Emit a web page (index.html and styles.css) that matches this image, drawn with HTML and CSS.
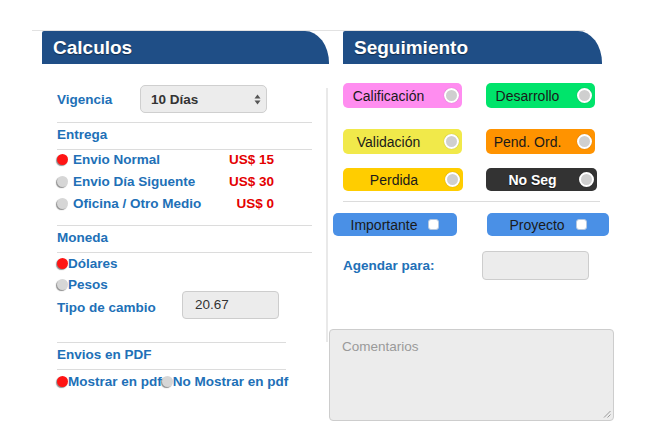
FILE: index.html
```html
<!DOCTYPE html>
<html lang="es">
<head>
<meta charset="utf-8">
<title>Calculos y Seguimiento</title>
<link rel="stylesheet" href="styles.css">
</head>
<body>
<div class="page">
  <div class="top-line"></div>
  <div class="cols">
    <section class="col-left">
      <h2 class="head">Calculos</h2>
      <div class="left-body">
        <div class="left-content">
          <div class="vig-row">
            <span class="lbl vig-lbl">Vigencia</span>
            <div class="select">
              <span>10 Días</span>
              <svg class="arrows" width="7" height="11" viewBox="0 0 7 11"><path d="M3.5 0.5 L6.5 4.5 L0.5 4.5 Z M3.5 10.5 L6.5 6.5 L0.5 6.5 Z" fill="#555"/></svg>
            </div>
          </div>
          <div class="rule rule-vig"></div>
          <div class="lbl sec-title">Entrega</div>
          <div class="rule rule-sec"></div>
          <div class="opts">
            <div class="opt"><span class="radio on"></span><span class="lbl opt-name">Envio Normal</span><span class="price">US$ 15</span></div>
            <div class="opt"><span class="radio"></span><span class="lbl opt-name">Envio Día Siguente</span><span class="price">US$ 30</span></div>
            <div class="opt"><span class="radio"></span><span class="lbl opt-name">Oficina / Otro Medio</span><span class="price">US$ 0</span></div>
          </div>
          <div class="rule rule-opts"></div>
          <div class="lbl sec-title">Moneda</div>
          <div class="rule rule-sec"></div>
          <div class="cur"><span class="radio on"></span><span class="lbl">Dólares</span></div>
          <div class="cur"><span class="radio"></span><span class="lbl">Pesos</span></div>
          <div class="tc-row">
            <span class="lbl tc-lbl">Tipo de cambio</span>
            <div class="input tc-input">20.67</div>
          </div>
          <div class="rule rule-short rule-pdf"></div>
          <div class="lbl sec-title">Envios en PDF</div>
          <div class="rule rule-short rule-sec"></div>
          <div class="pdf-row">
            <span class="radio on"></span><span class="lbl">Mostrar en pdf</span>
            <span class="radio"></span><span class="lbl">No Mostrar en pdf</span>
          </div>
        </div>
        <div class="vsep"></div>
      </div>
    </section>
    <section class="col-right">
      <h2 class="head">Seguimiento</h2>
      <div class="pill-row row1">
        <div class="pill pink w119"><span class="pill-txt pl-cal">Calificación</span><span class="knob"></span></div>
        <div class="pill green w109"><span class="pill-txt pl-des">Desarrollo</span><span class="knob"></span></div>
      </div>
      <div class="pill-row row2">
        <div class="pill yellow w119"><span class="pill-txt pl-cal">Validación</span><span class="knob"></span></div>
        <div class="pill orange w109"><span class="pill-txt pl-des">Pend. Ord.</span><span class="knob"></span></div>
      </div>
      <div class="pill-row row3">
        <div class="pill gold w120"><span class="pill-txt">Perdida</span><span class="knob"></span></div>
        <div class="pill dark w111"><span class="pill-txt">No Seg</span><span class="knob"></span></div>
      </div>
      <div class="rule rule-right"></div>
      <div class="btn-row">
        <div class="btn w124"><span>Importante</span><span class="chk"></span></div>
        <div class="btn w122"><span>Proyecto</span><span class="chk"></span></div>
      </div>
      <div class="ag-row">
        <span class="lbl ag-lbl">Agendar para:</span>
        <div class="input ag-input"></div>
      </div>
      <div class="textarea">
        <span class="ph">Comentarios</span>
        <svg class="grip" width="8" height="8" viewBox="0 0 8 8"><path d="M7.5 1 L1 7.5 M7.5 4.5 L4.5 7.5" stroke="#999" stroke-width="1"/></svg>
      </div>
    </section>
  </div>
</div>
</body>
</html>
```

FILE: styles.css
```css
* { box-sizing: border-box; }
html, body { margin: 0; padding: 0; background: #fff; }
body { font-family: "Liberation Sans", Arial, Helvetica, sans-serif; font-size: 13px; color: #333; }
.page { width: 670px; height: 448px; padding-top: 30px; overflow: hidden; }
.top-line { margin-left: 32px; width: 553px; height: 1px; background: #e2e2e2; }
.cols { display: flex; margin-left: 42px; }
.col-left { width: 287px; flex: none; }
.col-right { width: 259px; flex: none; margin-left: 14px; }

.head {
  margin: 0; height: 33px; line-height: 33px;
  background: #1f4e86; color: #fff;
  font-size: 19px; font-weight: bold;
  padding-left: 11px;
  border-top-left-radius: 2px;
  border-top-right-radius: 24px 32px;
  text-shadow: 0 1px 1px rgba(0,0,0,.45);
}

.lbl { color: #2170b7; font-weight: bold; font-size: 13.5px; white-space: nowrap; }

.left-body { display: flex; }
.left-content { width: 255px; margin-left: 15px; flex: none; }
.vsep { width: 2px; height: 254px; margin-left: 14px; margin-top: 24px; background: #e9e9e9; flex: none; }

.vig-row { display: flex; align-items: center; margin-top: 21px; height: 28px; }
.vig-lbl { width: 83px; flex: none; }
.select {
  width: 127px; height: 28px; background: #ececec; flex: none;
  border: 1px solid #cfcfcf; border-radius: 5px;
  display: flex; align-items: center; justify-content: space-between;
  padding: 0 5px 0 10px; font-weight: bold; color: #333; font-size: 13.5px;
}
.arrows { display: block; }

.rule { height: 1px; background: #dcdcdc; }
.rule-vig { margin-top: 9px; }
.rule-short { width: 229px; }
.sec-title { line-height: 22px; height: 22px; margin-top: 1px; }
.rule-sec { margin-top: 3px; }

.opts { margin-top: -2px; }
.opt { display: flex; align-items: center; height: 22px; }
.radio {
  width: 11px; height: 11px; border-radius: 50%;
  background: #d6d6d6; flex: none;
  box-shadow: -1px 1px 1px rgba(0,0,0,.45);
}
.radio.on { background: #ff1414; }
.opt .opt-name { margin-left: 5px; }
.price { margin-left: auto; width: 60px; text-align: right; color: #e40000; font-weight: bold; font-size: 13.5px; margin-right: 38px; flex: none; }
.rule-opts { margin-top: 11px; }

.cur { display: flex; align-items: center; height: 21px; }
.tc-row { display: flex; align-items: center; margin-top: -4px; height: 28px; }
.tc-lbl { width: 125px; padding-top: 4px; flex: none; }
.input { background: #ececec; border: 1px solid #cdcdcd; border-radius: 4px; flex: none; }
.tc-input { width: 97px; height: 28px; line-height: 26px; padding-left: 12px; color: #333; font-size: 13.5px; }
.rule-pdf { margin-top: 23px; }

.pdf-row { display: flex; align-items: center; height: 22px; }

.pill-row { display: flex; }
.row1 { margin-top: 19px; gap: 24px; }
.row2 { margin-top: 21px; gap: 24px; }
.row3 { margin-top: 14px; gap: 23px; }
.pill { height: 25px; border-radius: 5px; display: flex; align-items: center; padding-right: 3px; flex: none; }
.row3 .pill { height: 23px; }
.w119 { width: 119px; } .w109 { width: 109px; } .w120 { width: 120px; } .w111 { width: 111px; }
.pill-txt { flex: 1; text-align: center; color: #1a1a1a; font-size: 14px; white-space: nowrap; }
.pl-cal { padding-right: 10px; }
.pl-des { padding-right: 8px; }
.knob { width: 15px; height: 15px; border-radius: 50%; background: #cfcfcf; border: 2px solid #fff; flex: none; box-shadow: 0 0 1px rgba(0,0,0,.3); }
.pink { background: #ff8df0; }
.green { background: #00e46b; }
.yellow { background: #f1e94a; }
.orange { background: #ff9300; }
.gold { background: #ffcd00; }
.dark { background: #333; }
.dark .pill-txt { color: #fff; font-weight: bold; text-shadow: 0 1px 1px rgba(0,0,0,.6); }

.rule-right { margin-top: 10px; width: 257px; }
.btn-row { display: flex; margin-top: 11px; margin-left: -10px; gap: 30px; }
.btn {
  height: 23px; background: #4a90e6; border-radius: 5px; flex: none;
  display: flex; align-items: center; justify-content: center; gap: 11px;
  color: #1a1a1a; font-size: 14px;
}
.w124 { width: 124px; } .w122 { width: 122px; }
.chk { width: 11px; height: 11px; background: #fff; border-radius: 3px; border: 1px solid #b5c8e0; }

.ag-row { display: flex; align-items: center; margin-top: 15px; height: 29px; }
.ag-lbl { width: 139px; flex: none; }
.ag-input { width: 107px; height: 29px; }

.textarea {
  margin-top: 49px; margin-left: -14px; width: 285px; height: 92px;
  background: #ececec; border: 1px solid #cdcdcd; border-radius: 4px;
  padding: 9px 12px; position: relative;
}
.ph { color: #9a9a9a; font-size: 13.5px; }
.grip { position: absolute; right: 2px; bottom: 2px; }
```
